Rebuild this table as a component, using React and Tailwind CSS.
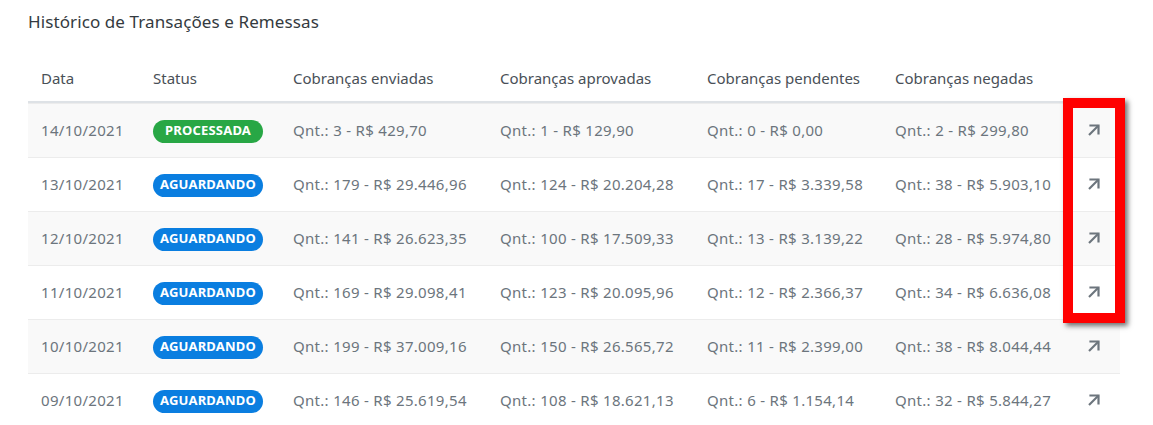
const rows = [
  { date: "14/10/2021", status: "PROCESSADA", sent: "Qnt.: 3 - R$ 429,70", approved: "Qnt.: 1 - R$ 129,90", pending: "Qnt.: 0 - R$ 0,00", denied: "Qnt.: 2 - R$ 299,80" },
  { date: "13/10/2021", status: "AGUARDANDO", sent: "Qnt.: 179 - R$ 29.446,96", approved: "Qnt.: 124 - R$ 20.204,28", pending: "Qnt.: 17 - R$ 3.339,58", denied: "Qnt.: 38 - R$ 5.903,10" },
  { date: "12/10/2021", status: "AGUARDANDO", sent: "Qnt.: 141 - R$ 26.623,35", approved: "Qnt.: 100 - R$ 17.509,33", pending: "Qnt.: 13 - R$ 3.139,22", denied: "Qnt.: 28 - R$ 5.974,80" },
  { date: "11/10/2021", status: "AGUARDANDO", sent: "Qnt.: 169 - R$ 29.098,41", approved: "Qnt.: 123 - R$ 20.095,96", pending: "Qnt.: 12 - R$ 2.366,37", denied: "Qnt.: 34 - R$ 6.636,08" },
  { date: "10/10/2021", status: "AGUARDANDO", sent: "Qnt.: 199 - R$ 37.009,16", approved: "Qnt.: 150 - R$ 26.565,72", pending: "Qnt.: 11 - R$ 2.399,00", denied: "Qnt.: 38 - R$ 8.044,44" },
  { date: "09/10/2021", status: "AGUARDANDO", sent: "Qnt.: 146 - R$ 25.619,54", approved: "Qnt.: 108 - R$ 18.621,13", pending: "Qnt.: 6 - R$ 1.154,14", denied: "Qnt.: 32 - R$ 5.844,27" },
];

const cols = "grid grid-cols-[112px_140px_207px_207px_188px_185px_53px]";

const ArrowIcon = () => (
  <svg width="14" height="14" viewBox="0 0 14 14" fill="none" stroke="#6c757d" strokeWidth="2.2">
    <path d="M2 12L11.5 2.5" />
    <path d="M3.5 2.5H11.5V10.5" strokeLinecap="square" />
  </svg>
);

const Badge = ({ status }) => (
  <span
    className={
      "inline-flex h-[23px] w-[110px] items-center justify-center rounded-full text-[13px] font-bold tracking-[0.2px] text-white " +
      (status === "PROCESSADA" ? "bg-[#28a745]" : "bg-[#0a7ee0]")
    }
  >
    {status}
  </span>
);

const App = () => {
  return (
    <div
      className="relative min-h-screen bg-white px-[28px] pt-[10px]"
      style={{ fontFamily: '"Noto Sans", "Open Sans", sans-serif' }}
    >
      <h2 className="h-[24px] text-[17px] leading-[24px] tracking-[0.1px] text-[#343a40]">
        Histórico de Transações e Remessas
      </h2>

      <div className="mt-[21px] w-[1092px] text-[15px]">
        <div className={cols + " h-[48px] items-center border-b-2 border-[#dee2e6] text-[#495057]"}>
          <div className="px-[13px]">Data</div>
          <div className="px-[13px]">Status</div>
          <div className="px-[13px]">Cobranças enviadas</div>
          <div className="px-[13px]">Cobranças aprovadas</div>
          <div className="px-[13px]">Cobranças pendentes</div>
          <div className="px-[13px]">Cobranças negadas</div>
          <div></div>
        </div>

        {rows.map((r, i) => (
          <div
            key={r.date}
            className={
              cols +
              " h-[54px] items-center border-t border-[#ececec] text-[#6c757d] first:border-t-0 " +
              (i % 2 === 0 ? "bg-[#f9f9f9]" : "bg-white")
            }
          >
            <div className="px-[13px] tracking-[0.3px]">{r.date}</div>
            <div className="px-[13px]">
              <Badge status={r.status} />
            </div>
            <div className="px-[13px] whitespace-nowrap tracking-[0.3px]">{r.sent}</div>
            <div className="px-[13px] whitespace-nowrap tracking-[0.3px]">{r.approved}</div>
            <div className="px-[13px] whitespace-nowrap tracking-[0.3px]">{r.pending}</div>
            <div className="px-[13px] whitespace-nowrap tracking-[0.3px]">{r.denied}</div>
            <div className="flex justify-center pl-[0px] pb-[2px]">
              <ArrowIcon />
            </div>
          </div>
        ))}
      </div>

      {/* highlight annotation */}
      <div className="absolute left-[1063px] top-[98px] h-[225px] w-[62px] border-[10px] border-[#ff0000] shadow-[3px_3px_5px_rgba(0,0,0,0.55)]"></div>
    </div>
  );
};

export default App;
